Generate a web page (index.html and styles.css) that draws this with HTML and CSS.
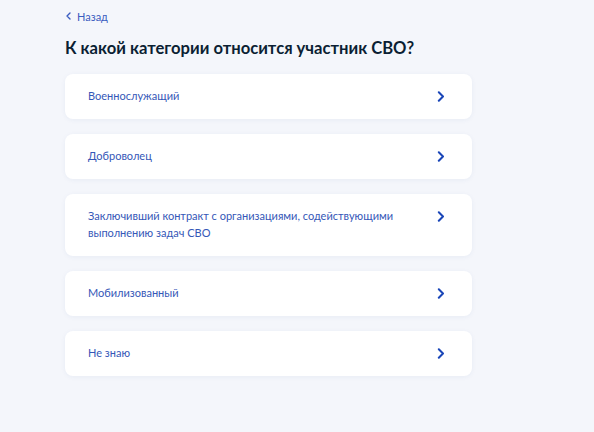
FILE: index.html
```
<!DOCTYPE html>
<html lang="ru">
<head>
<meta charset="utf-8">
<title>Категория участника СВО</title>
<link rel="stylesheet" href="styles.css">
</head>
<body>
<main class="page">
  <a class="back" href="#">
    <svg class="back-icon" width="5" height="8" viewBox="0 0 5 8"><path d="M4 1 L1 4 L4 7" fill="none" stroke="currentColor" stroke-width="1.4" stroke-linecap="round" stroke-linejoin="round"/></svg>
    <span>Назад</span>
  </a>
  <h1 class="title">К какой категории относится участник СВО?</h1>
  <ul class="options">
    <li class="card"><span class="card-text">Военнослужащий</span><span class="chev"><svg width="8" height="11" viewBox="0 0 8 11"><path d="M1.8 1.2 L6 5.5 L1.8 9.8" fill="none" stroke="currentColor" stroke-width="2" stroke-linecap="round" stroke-linejoin="round"/></svg></span></li>
    <li class="card"><span class="card-text">Доброволец</span><span class="chev"><svg width="8" height="11" viewBox="0 0 8 11"><path d="M1.8 1.2 L6 5.5 L1.8 9.8" fill="none" stroke="currentColor" stroke-width="2" stroke-linecap="round" stroke-linejoin="round"/></svg></span></li>
    <li class="card"><span class="card-text">Заключивший контракт с организациями, содействующими выполнению задач СВО</span><span class="chev"><svg width="8" height="11" viewBox="0 0 8 11"><path d="M1.8 1.2 L6 5.5 L1.8 9.8" fill="none" stroke="currentColor" stroke-width="2" stroke-linecap="round" stroke-linejoin="round"/></svg></span></li>
    <li class="card"><span class="card-text">Мобилизованный</span><span class="chev"><svg width="8" height="11" viewBox="0 0 8 11"><path d="M1.8 1.2 L6 5.5 L1.8 9.8" fill="none" stroke="currentColor" stroke-width="2" stroke-linecap="round" stroke-linejoin="round"/></svg></span></li>
    <li class="card"><span class="card-text">Не знаю</span><span class="chev"><svg width="8" height="11" viewBox="0 0 8 11"><path d="M1.8 1.2 L6 5.5 L1.8 9.8" fill="none" stroke="currentColor" stroke-width="2" stroke-linecap="round" stroke-linejoin="round"/></svg></span></li>
  </ul>
</main>
</body>
</html>
```
FILE: styles.css
```
* { box-sizing: border-box; }
html, body { margin: 0; padding: 0; }
body {
  background: #f4f6fb;
  font-family: Lato, "Noto Sans", sans-serif;
  width: 594px;
  height: 432px;
  overflow: hidden;
}
.page {
  padding: 8px 0 0 65px;
  width: 472px;
}
.back {
  display: flex;
  align-items: center;
  gap: 6px;
  height: 16px;
  padding-left: 1px;
  color: #3a5cc0;
  font-size: 11px;
  text-decoration: none;
}
.back-icon { display: block; }
.title {
  margin: 13px 0 15px;
  font-size: 16.6px;
  line-height: 22px;
  font-weight: 700;
  color: #0b1f33;
}
.options {
  list-style: none;
  margin: 0;
  padding: 0;
  display: flex;
  flex-direction: column;
  gap: 15px;
}
.card {
  display: flex;
  align-items: flex-start;
  justify-content: space-between;
  gap: 20px;
  background: #ffffff;
  border-radius: 8px;
  padding: 14.25px 27px 14.25px 23px;
  box-shadow: 0 1px 5px rgba(40, 70, 140, 0.06);
}
.card-text {
  font-size: 11px;
  line-height: 16.5px;
  color: #3557b7;
  max-width: 320px;
}
.chev {
  height: 16.5px;
  display: flex;
  align-items: center;
  color: #1a46b8;
}
.chev svg { display: block; }
```
